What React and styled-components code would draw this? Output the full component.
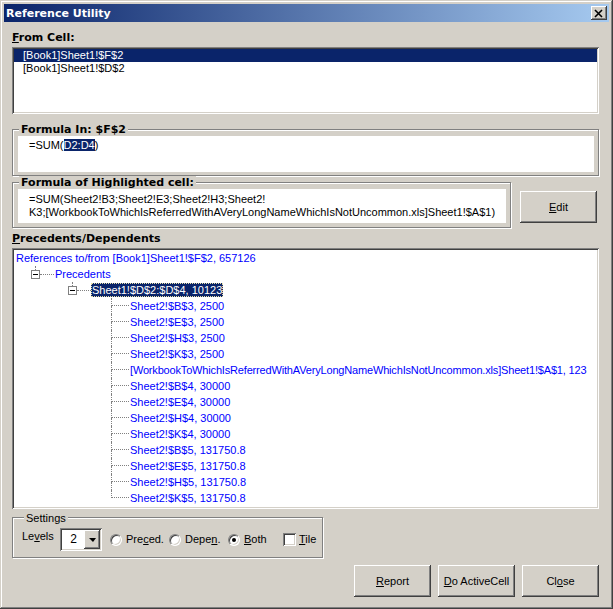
import styled, { createGlobalStyle } from 'styled-components'

const face = '#d4d0c8'
const navy = '#0a246a'

const raised = `
  box-shadow: inset -1px -1px #404040, inset 1px 1px #ffffff,
    inset -2px -2px #808080, inset 2px 2px ${face};
`
const sunken = `
  box-shadow: inset 1px 1px #808080, inset -1px -1px #ffffff,
    inset 2px 2px #404040, inset -2px -2px ${face};
`

const GlobalStyle = createGlobalStyle`
  html, body {
    margin: 0;
    padding: 0;
    background: ${face};
  }
  body {
    font-family: "Liberation Sans", Arial, sans-serif;
    font-size: 11px;
    line-height: 13px;
    color: #000;
  }
  * {
    box-sizing: border-box;
  }
`

const Window = styled.div`
  width: 613px;
  height: 609px;
  padding: 4px;
  display: flex;
  flex-direction: column;
  background: ${face};
  box-shadow: inset -1px -1px #404040, inset 1px 1px ${face},
    inset -2px -2px #808080, inset 2px 2px #ffffff;
`

const TitleBar = styled.div`
  height: 18px;
  flex: none;
  display: flex;
  align-items: center;
  justify-content: space-between;
  padding: 0 2px 0 2px;
  background: linear-gradient(to right, ${navy}, #a6caf0);
`

const Title = styled.span`
  font-family: "DejaVu Sans", Verdana, sans-serif;
  font-weight: bold;
  font-size: 11px;
  color: #fff;
`

const CloseBox = styled.div`
  width: 16px;
  height: 14px;
  background: ${face};
  ${raised}
  display: flex;
  align-items: center;
  justify-content: center;
`

const Body = styled.div`
  flex: 1;
  display: flex;
  flex-direction: column;
  padding: 9px 10px 0 8px;
`

const Caption = styled.div`
  font-family: "DejaVu Sans", Verdana, sans-serif;
  font-weight: bold;
  font-size: 11px;
  line-height: 13px;
  margin-top: ${p => p.$top || 0}px;
  margin-bottom: 3px;
`

const ListBox = styled.div`
  height: 67px;
  background: #fff;
  ${sunken}
  padding: 2px;
`

const ListItem = styled.div`
  height: 13px;
  line-height: 13px;
  padding-left: 9px;
  background: ${p => (p.$selected ? navy : 'transparent')};
  color: ${p => (p.$selected ? '#fff' : '#000')};
`

const GroupBox = styled.div`
  display: flex;
  flex-direction: column;
  margin-top: ${p => p.$top || 0}px;
  width: ${p => (p.$width ? `${p.$width}px` : 'auto')};
  padding: 0 4px ${p => p.$bottom ?? 3}px 5px;
  border: 1px solid #808080;
  box-shadow: inset 1px 1px #ffffff, 1px 1px #ffffff;
  flex: none;
`

const Legend = styled.span`
  align-self: flex-start;
  margin: ${p => p.$lift || -7}px 0 0 ${p => p.$left ?? 1}px;
  padding: 0 2px;
  height: 13px;
  line-height: 13px;
  background: ${face};
  font-family: ${p => (p.$plain ? '"Liberation Sans", Arial, sans-serif' : '"DejaVu Sans", Verdana, sans-serif')};
  font-weight: ${p => (p.$plain ? 'normal' : 'bold')};
`

const TextArea = styled.div`
  height: ${p => p.$height}px;
  background: #fff;
  padding: ${p => p.$pad || 3}px 10px 0 11px;
  white-space: nowrap;
  overflow: hidden;
`

const Marked = styled.span`
  background: ${navy};
  color: #fff;
`

const FormulaRow = styled.div`
  display: flex;
  align-items: flex-start;
  margin-top: 6px;
`

const Button = styled.button`
  width: 77px;
  height: 32px;
  flex: none;
  margin: ${p => p.$margin || '0'};
  border: none;
  background: ${face};
  ${raised}
  font-family: "Liberation Sans", Arial, sans-serif;
  font-size: 11px;
  color: #000;
  padding: 0;
`

const Tree = styled.div`
  height: 261px;
  flex: none;
  background: #fff;
  ${sunken}
  padding: 2px;
`

/* keeps node labels inside the sunken edge */
const TreeClip = styled.div`
  height: 100%;
  overflow: hidden;
`

const TreeRow = styled.div`
  display: flex;
  align-items: center;
  height: 16px;
  padding-left: ${p => p.$indent}px;
  white-space: nowrap;
`

const Knot = styled.div`
  width: 9px;
  height: 16px;
  flex: none;
  display: flex;
  flex-direction: column;
  align-items: center;
`

const Stub = styled.div`
  height: 4px;
  border-left: 1px dotted #808080;
`

const Toggle = styled.div`
  width: 9px;
  height: 9px;
  border: 1px solid #808080;
  background: #fff;
  display: flex;
  align-items: center;
  justify-content: center;

  &::after {
    content: '';
    width: 5px;
    height: 1px;
    background: #000;
  }
`

const Branch = styled.div`
  width: 14px;
  height: 1px;
  flex: none;
  border-top: 1px dotted #808080;
`

const Elbow = styled.div`
  width: 18px;
  height: 16px;
  flex: none;
  display: flex;
  flex-direction: column;
`

const ElbowTop = styled.div`
  height: 8px;
  border-left: 1px dotted #808080;
  border-bottom: 1px dotted #808080;
`

const ElbowBottom = styled.div`
  height: 8px;
  border-left: ${p => (p.$last ? 'none' : '1px dotted #808080')};
`

const NodeText = styled.span`
  padding: 0 1px;
  height: 14px;
  line-height: 14px;
  letter-spacing: ${p => (p.$long ? '-0.17px' : 'normal')};
  color: ${p => (p.$selected ? '#fff' : '#0000ff')};
  background: ${p => (p.$selected ? navy : 'transparent')};
  outline: ${p => (p.$selected ? '1px dotted #e8e0a8' : 'none')};
  outline-offset: -1px;
`

const Footer = styled.div`
  display: flex;
  flex-direction: column;
  margin-top: 8px;
`

const SettingsRow = styled.div`
  display: flex;
  align-items: center;
  height: 23px;
  margin-top: 3px;
  padding-left: 4px;
`

const LevelsLabel = styled.span`
  width: 38px;
  align-self: flex-start;
  margin-top: 2px;
`

const Combo = styled.div`
  width: 42px;
  height: 23px;
  background: #fff;
  ${sunken}
  padding: 2px;
  display: flex;
  margin-right: 8px;
`

const ComboValue = styled.span`
  flex: 1;
  text-align: center;
  line-height: 19px;
  font-size: 12px;
  padding-left: 1px;
`

const ComboButton = styled.div`
  width: 16px;
  height: 19px;
  background: ${face};
  ${raised}
  display: flex;
  align-items: center;
  justify-content: center;

  &::after {
    content: '';
    border-left: 4px solid transparent;
    border-right: 3px solid transparent;
    border-top: 4px solid #000;
    margin-top: 1px;
  }
`

const Option = styled.label`
  display: flex;
  align-items: center;
  gap: ${p => p.$gap || 4}px;
  width: ${p => (p.$width ? `${p.$width}px` : 'auto')};
  flex: none;
`

const RadioDot = styled.span`
  width: 12px;
  height: 12px;
  border-radius: 50%;
  background: #fff;
  flex: none;
  border: 1px solid;
  border-color: #808080 #ffffff #ffffff #808080;
  box-shadow: inset 1px 1px #404040, inset -1px -1px ${face};
  display: flex;
  align-items: center;
  justify-content: center;

  &::after {
    content: '';
    width: 4px;
    height: 4px;
    border-radius: 50%;
    background: ${p => (p.$checked ? '#000' : 'transparent')};
  }
`

const CheckBox = styled.span`
  width: 13px;
  height: 13px;
  flex: none;
  background: #fff;
  ${sunken}
`

const ButtonBar = styled.div`
  display: flex;
  justify-content: flex-end;
  gap: 7px;
  margin-top: 7px;
`

const references = [
  'Sheet2!$B$3, 2500',
  'Sheet2!$E$3, 2500',
  'Sheet2!$H$3, 2500',
  'Sheet2!$K$3, 2500',
  '[WorkbookToWhichIsReferredWithAVeryLongNameWhichIsNotUncommon.xls]Sheet1!$A$1, 123',
  'Sheet2!$B$4, 30000',
  'Sheet2!$E$4, 30000',
  'Sheet2!$H$4, 30000',
  'Sheet2!$K$4, 30000',
  'Sheet2!$B$5, 131750.8',
  'Sheet2!$E$5, 131750.8',
  'Sheet2!$H$5, 131750.8',
  'Sheet2!$K$5, 131750.8',
]

function ExpandedNode({ indent, label, selected }) {
  return (
    <TreeRow $indent={indent}>
      <Knot>
        <Stub />
        <Toggle />
      </Knot>
      <Branch />
      <NodeText $selected={selected}>{label}</NodeText>
    </TreeRow>
  )
}

export default function App() {
  return (
    <>
      <GlobalStyle />
      <Window>
        <TitleBar>
          <Title>Reference Utility</Title>
          <CloseBox>
            <svg width="10" height="9" viewBox="0 0 10 9">
              <path d="M1 1l7 7M8 1l-7 7" stroke="#000" strokeWidth="1.6" fill="none" />
            </svg>
          </CloseBox>
        </TitleBar>

        <Body>
          <Caption>
            <u>F</u>rom Cell:
          </Caption>
          <ListBox>
            <ListItem $selected>[Book1]Sheet1!$F$2</ListItem>
            <ListItem>[Book1]Sheet1!$D$2</ListItem>
          </ListBox>

          <GroupBox $top={15}>
            <Legend>Formula In: $F$2</Legend>
            <TextArea $height={36}>
              =SUM(<Marked>D2:D4</Marked>)
            </TextArea>
          </GroupBox>

          <FormulaRow>
            <GroupBox $width={499} $bottom={4}>
              <Legend>Formula of Highlighted cell:</Legend>
              <TextArea $height={34} $pad={4}>
                =SUM(Sheet2!B3;Sheet2!E3;Sheet2!H3;Sheet2!
                <br />
                K3;[WorkbookToWhichIsReferredWithAVeryLongNameWhichIsNotUncommon.xls]Sheet1!$A$1)
              </TextArea>
            </GroupBox>
            <Button $margin="9px 0 0 9px">
              <u>E</u>dit
            </Button>
          </FormulaRow>

          <Caption $top={4}>
            <u>P</u>recedents/Dependents
          </Caption>
          <Tree>
            <TreeClip>
              <TreeRow $indent={1}>
                <NodeText>References to/from [Book1]Sheet1!$F$2, 657126</NodeText>
              </TreeRow>
              <ExpandedNode indent={17} label="Precedents" />
              <ExpandedNode indent={54} label="Sheet1!$D$2:$D$4, 10123" selected />
              {references.map((ref, i) => (
                <TreeRow key={ref} $indent={97}>
                  <Elbow>
                    <ElbowTop />
                    <ElbowBottom $last={i === references.length - 1} />
                  </Elbow>
                  <NodeText $long={ref.length > 40}>{ref}</NodeText>
                </TreeRow>
              ))}
            </TreeClip>
          </Tree>

          <Footer>
            <GroupBox $width={311} $bottom={6}>
              <Legend $plain $lift={-6} $left={6}>
                Settings
              </Legend>
              <SettingsRow>
                <LevelsLabel>
                  Le<u>v</u>els
                </LevelsLabel>
                <Combo>
                  <ComboValue>2</ComboValue>
                  <ComboButton />
                </Combo>
                <Option $width={59}>
                  <RadioDot />
                  <span>
                    Pre<u>c</u>ed.
                  </span>
                </Option>
                <Option $width={59}>
                  <RadioDot />
                  <span>
                    Depe<u>n</u>.
                  </span>
                </Option>
                <Option $width={55}>
                  <RadioDot $checked />
                  <span>
                    <u>B</u>oth
                  </span>
                </Option>
                <Option $gap={3}>
                  <CheckBox />
                  <span>
                    <u>T</u>ile
                  </span>
                </Option>
              </SettingsRow>
            </GroupBox>

            <ButtonBar>
              <Button>
                <u>R</u>eport
              </Button>
              <Button>
                <u>D</u>o ActiveCell
              </Button>
              <Button>
                Cl<u>o</u>se
              </Button>
            </ButtonBar>
          </Footer>
        </Body>
      </Window>
    </>
  )
}
